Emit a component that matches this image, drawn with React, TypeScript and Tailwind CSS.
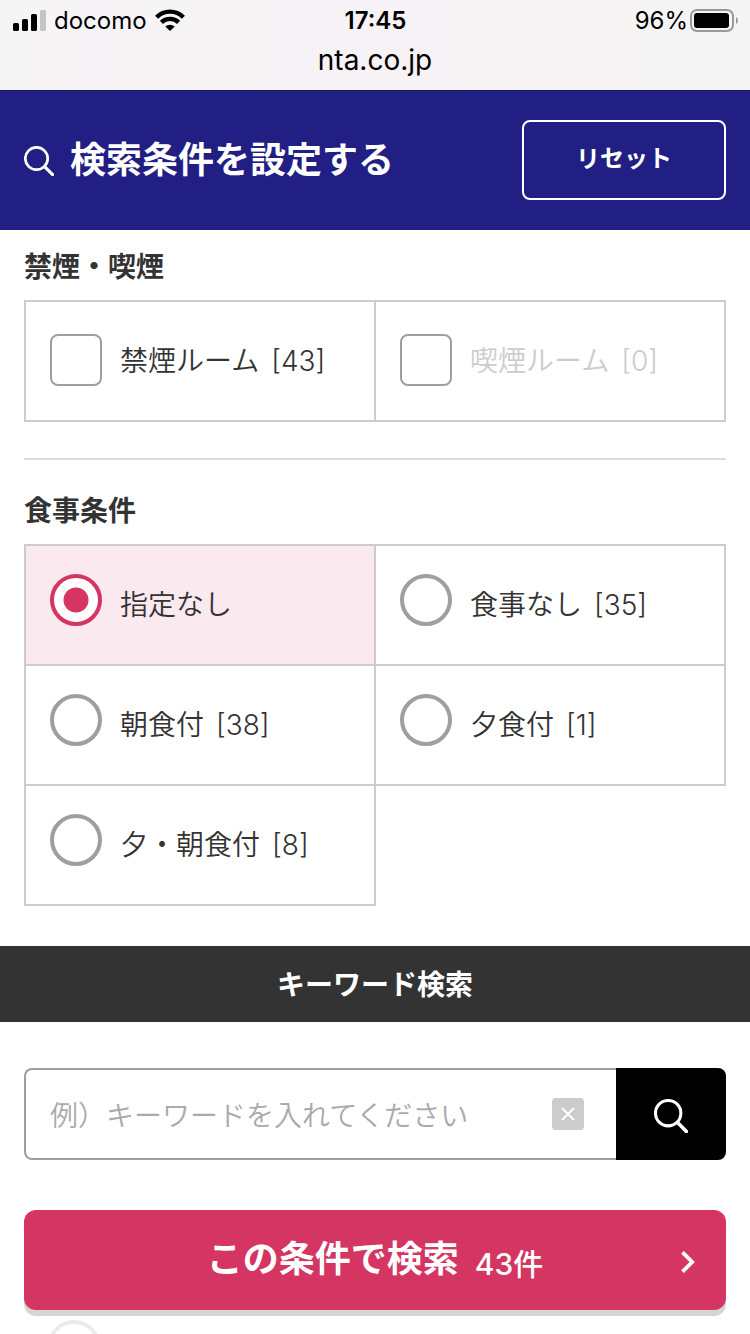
import React from 'react';

interface Option {
  id: string;
  label: string;
  count?: number;
  disabled?: boolean;
}

const smokingOptions: Option[] = [
  { id: 'non-smoking', label: '禁煙ルーム', count: 43 },
  { id: 'smoking', label: '喫煙ルーム', count: 0, disabled: true },
];

const mealOptions: Option[] = [
  { id: 'meal-any', label: '指定なし' },
  { id: 'meal-none', label: '食事なし', count: 35 },
  { id: 'meal-breakfast', label: '朝食付', count: 38 },
  { id: 'meal-dinner', label: '夕食付', count: 1 },
  { id: 'meal-both', label: '夕・朝食付', count: 8 },
];

const SearchIcon: React.FC<{ className?: string }> = ({ className }) => (
  <svg viewBox="0 0 30 30" fill="none" stroke="currentColor" className={className} aria-hidden="true">
    <circle cx="12.5" cy="12.5" r="11.2" strokeWidth="2.7" />
    <path d="M20.8 20.8 28.6 28.6" strokeWidth="3.2" strokeLinecap="round" />
  </svg>
);

const StatusBar: React.FC = () => (
  <div className="h-[90px] bg-linear-to-r from-[#f6f5f6] via-[#f7f2f5] to-[#f5f5f5] text-black">
    <div className="grid h-10 grid-cols-3 items-center pl-[13px] pr-3 text-2xl">
      <div className="flex items-center">
        <svg viewBox="0 0 33 21" className="h-[21px] w-[33px]" aria-hidden="true">
          <rect x="0" y="13" width="6" height="8" rx="1.5" />
          <rect x="9" y="9" width="6" height="12" rx="1.5" />
          <rect x="18" y="4" width="6" height="17" rx="1.5" />
          <rect x="27" y="0" width="6" height="21" rx="1.5" fill="#c4c3c5" />
        </svg>
        <span className="ml-2 pt-[2px]">docomo</span>
        <svg viewBox="0 0 30 22" className="ml-2 h-[22px] w-[30px]" aria-hidden="true">
          <g fill="none" stroke="#000" strokeWidth="4.4">
            <path d="M1.6 8.2a19 19 0 0 1 26.8 0" />
            <path d="M6.4 13.4a12.2 12.2 0 0 1 17.2 0" />
          </g>
          <path d="M10.2 17.4a7.4 7.4 0 0 1 9.6 0L15 22z" />
        </svg>
      </div>
      <div className="pt-[2px] text-center font-semibold">17:45</div>
      <div className="flex items-center justify-end gap-[2px]">
        <span className="pt-[2px]">96%</span>
        <svg viewBox="0 0 48 23" className="h-[23px] w-[48px]" aria-hidden="true">
          <rect x="1" y="1" width="42" height="21" rx="6" fill="none" stroke="#999" strokeWidth="2" />
          <rect x="4" y="4" width="35" height="15" rx="3" />
          <path d="M46 8q2 1 2 3.5T46 15z" fill="#999" />
        </svg>
      </div>
    </div>
    <div className="text-center text-[28px] leading-10">nta.co.jp</div>
  </div>
);

const OptionGrid: React.FC<{ name: string; type: 'checkbox' | 'radio'; options: Option[]; selected?: string }> = ({
  name,
  type,
  options,
  selected,
}) => (
  <div className="grid grid-cols-2 pb-[2px] pr-[2px]">
    {options.map((option) => (
      <label
        key={option.id}
        htmlFor={option.id}
        className={`-mb-[2px] -mr-[2px] flex h-[122px] items-center gap-[18px] border-2 border-[#ccc] pb-[2px] pl-6 text-[28px] font-[350] ${
          option.id === selected ? 'bg-[#fae9ef]' : 'bg-white'
        } ${option.disabled ? 'text-[#ccc]' : 'text-[#333]'}`}
      >
        <input
          id={option.id}
          name={name}
          type={type}
          disabled={option.disabled}
          defaultChecked={option.id === selected}
          className={
            type === 'radio'
              ? 'mb-2 size-[52px] shrink-0 appearance-none rounded-full border-4 border-[#9f9f9f] bg-white checked:border-[#d43562] checked:bg-[radial-gradient(circle,#d43562_12px,#fff_13px)]'
              : 'size-[52px] shrink-0 appearance-none rounded-lg border-2 border-[#9f9f9f] bg-white checked:bg-[#d43562]'
          }
        />
        <span className="flex gap-3 pt-[2px]">
          <span>{option.label}</span>
          {option.count !== undefined && <span>[{option.count}]</span>}
        </span>
      </label>
    ))}
  </div>
);

const App: React.FC = () => {
  return (
    <div className="min-h-screen bg-white font-[Inter,'Noto_Sans_CJK_JP',sans-serif] text-[#333]" lang="ja">
      <StatusBar />

      <header className="flex items-center justify-between border-t border-[#1b1a60] bg-[#211f84] px-6 pb-[30px] pt-[29px] text-white">
        <div className="flex items-center gap-4 pt-[2px]">
          <SearchIcon className="size-[30px]" />
          <h1 className="pb-[2px] text-4xl font-bold">検索条件を設定する</h1>
        </div>
        <button type="button" className="h-20 w-[204px] rounded-lg border-2 border-white pb-[2px] text-2xl font-bold">
          リセット
        </button>
      </header>

      <main>
        <form>
          <div className="px-6 pt-[17px]">
            <section>
              <h2 className="mb-[13px] text-[28px] font-bold leading-10">禁煙・喫煙</h2>
              <OptionGrid name="smoking" type="checkbox" options={smokingOptions} />
            </section>
            <section className="mt-9 border-t-2 border-[#ddd] pt-[31px]">
              <h2 className="mb-[13px] text-[28px] font-bold leading-10">食事条件</h2>
              <OptionGrid name="meal" type="radio" options={mealOptions} selected="meal-any" />
            </section>
          </div>

          <h2 className="mt-10 bg-[#333] pt-[2px] text-center text-[28px] font-bold leading-[74px] text-white">
            <label htmlFor="keyword">キーワード検索</label>
          </h2>

          <div className="mx-6 mt-[46px] flex h-[92px]">
            <div className="flex flex-1 items-center rounded-l-lg border-2 border-r-0 border-[#9f9f9f] pl-6 pr-8">
              <input
                id="keyword"
                type="text"
                placeholder="例）キーワードを入れてください"
                className="h-full min-w-0 flex-1 pt-1 text-[28px] font-[350] outline-none placeholder:text-[#aaa]"
              />
              <button
                type="button"
                aria-label="クリア"
                className="flex size-8 items-center justify-center rounded bg-[#ccc] text-white"
              >
                <svg viewBox="0 0 14 14" className="size-[14px]" stroke="currentColor" strokeWidth="2" aria-hidden="true">
                  <path d="M1 1 13 13M13 1 1 13" />
                </svg>
              </button>
            </div>
            <button
              type="submit"
              aria-label="検索"
              className="flex w-[110px] items-center justify-center rounded-r-lg bg-black pt-1 text-white"
            >
              <SearchIcon className="size-[34px]" />
            </button>
          </div>

          <div className="mt-[50px] px-6">
            <button
              type="submit"
              className="relative flex h-[100px] w-full items-center justify-center gap-4 rounded-xl bg-[#d43562] font-bold text-white shadow-[0_6px_0_#d5d5d5]"
            >
              <span className="pb-[2px] text-4xl">この条件で検索</span>
              <span className="pt-2 text-[30px] font-medium">43件</span>
              <svg
                viewBox="0 0 14 22"
                className="absolute right-[31px] top-[41px] h-[22px] w-[14px]"
                fill="none"
                stroke="currentColor"
                strokeWidth="3.8"
                aria-hidden="true"
              >
                <path d="M1.5 1.3 11.2 11 1.5 20.7" />
              </svg>
            </button>
          </div>
        </form>

        {/* next section, only its first control shows under the button */}
        <div className="mt-[10px] h-[14px] overflow-hidden px-6">
          <div className="ml-[23px] size-[54px] rounded-full border-4 border-[#ebebeb]" />
        </div>
      </main>
    </div>
  );
};

export default App;
